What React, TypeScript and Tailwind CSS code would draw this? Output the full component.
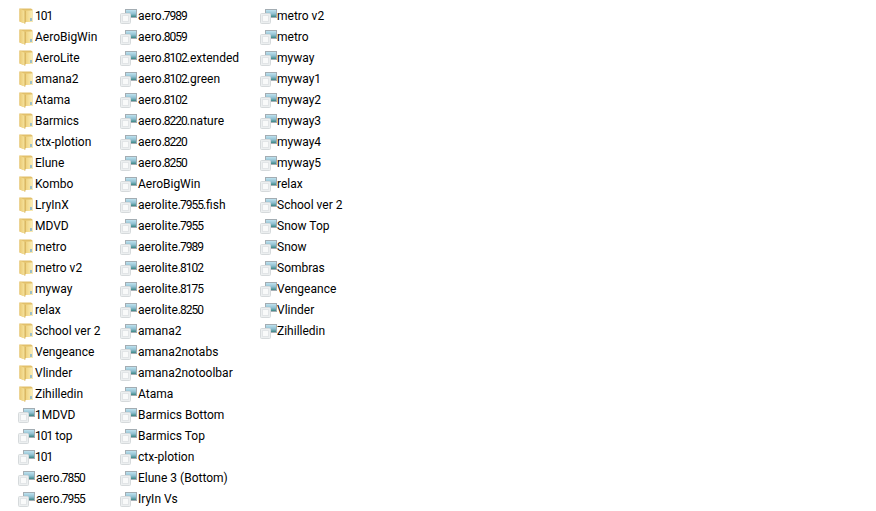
const col1F = ["101","AeroBigWin","AeroLite","amana2","Atama","Barmics","ctx-plotion","Elune","Kombo","LryInX","MDVD","metro","metro v2","myway","relax","School ver 2","Vengeance","Vlinder","Zihilledin"];
const col1T = ["1MDVD","101 top","101"];
const col1U = ["aero.7850","aero.7955"];
const col2 = ["aero.7989","aero.8059","aero.8102.extended","aero.8102.green","aero.8102","aero.8220.nature","aero.8220","aero.8250","AeroBigWin","aerolite.7955.fish","aerolite.7955","aerolite.7989","aerolite.8102","aerolite.8175","aerolite.8250","amana2","amana2notabs","amana2notoolbar","Atama","Barmics Bottom","Barmics Top","ctx-plotion","Elune 3 (Bottom)","IryIn Vs"];
const col3 = ["metro v2","metro","myway","myway1","myway2","myway3","myway4","myway5","relax","School ver 2","Snow Top","Snow","Sombras","Vengeance","Vlinder","Zihilledin"];

function FolderIcon() {
  return (
    <svg width="16" height="16" viewBox="0 0 16 16" className="shrink-0">
      <defs>
        <linearGradient id="fg" x1="0" y1="0" x2="1" y2="0">
          <stop offset="0" stopColor="#efd27f" />
          <stop offset="1" stopColor="#fbeeb6" />
        </linearGradient>
        <linearGradient id="fl" x1="0" y1="0" x2="1" y2="0">
          <stop offset="0" stopColor="#e9c873" />
          <stop offset="1" stopColor="#f8e6a0" />
        </linearGradient>
      </defs>
      <path d="M1.5 0.5 H13 L14.5 1.5 V14 H7 V15.5 L1.5 13.5 Z" fill="#e2c06a" />
      <path d="M7.5 2.5 H14.5 V14 H7.5 Z" fill="url(#fg)" />
      <path d="M1.5 0.5 L7 3 V15.5 L1.5 13.5 Z" fill="url(#fl)" />
      <path d="M7 3 V15.5" stroke="#c9a24d" strokeWidth="0.8" />
      <path d="M13 10 V13" stroke="#5fa3dc" strokeWidth="1.2" />
    </svg>
  );
}

function ThemeIcon() {
  return (
    <svg width="17" height="16" viewBox="0 0 17 16" className="shrink-0">
      <defs>
        <linearGradient id="tg" x1="0" y1="0" x2="0" y2="1">
          <stop offset="0" stopColor="#c5e6f2" />
          <stop offset="0.55" stopColor="#8fbfd0" />
          <stop offset="1" stopColor="#2f7d78" />
        </linearGradient>
      </defs>
      <rect x="5.5" y="1.5" width="11" height="8" fill="url(#tg)" stroke="#a3adb3" strokeWidth="1" />
      <rect x="0.5" y="5.5" width="10" height="10" rx="1" fill="#eceff0" stroke="#d6dadc" strokeWidth="1" />
      <rect x="2.5" y="7.5" width="6" height="6" fill="#f9fafa" stroke="#e2e5e7" strokeWidth="1" />
    </svg>
  );
}

function Label({ text }: { text: string }) {
  return (
    <span>
      {text.split(/(\.?\d[\d.]*\d)/).map((part, i) =>
        i % 2 === 1 ? <span key={i} className="tracking-[-1px]">{part}</span> : part
      )}
    </span>
  );
}

function Row({ label, folder, gap }: { label: string; folder?: boolean; gap: string }) {
  return (
    <div className={`flex h-[21px] items-center whitespace-nowrap ${gap}`}>
      {folder ? <FolderIcon /> : <ThemeIcon />}
      <Label text={label} />
    </div>
  );
}

export default function App() {
  return (
    <div className="flex h-[511px] w-[876px] overflow-hidden bg-white pt-[5px] pl-[18px] text-[12px] text-black [font-family:'Roboto',sans-serif]">
      <div className="flex w-[102px] flex-col">
        {col1F.map((l) => <Row key={l} label={l} folder gap="gap-[1px]" />)}
        {col1T.map((l) => <Row key={l + "t"} label={l} gap="gap-0" />)}
        {col1U.map((l) => <Row key={l + "u"} label={l} gap="gap-[1px]" />)}
      </div>
      <div className="flex w-[140px] flex-col">
        {col2.map((l) => <Row key={l} label={l} gap="gap-[1px]" />)}
      </div>
      <div className="flex flex-col">
        {col3.map((l) => <Row key={l} label={l} gap="gap-0" />)}
      </div>
    </div>
  );
}
